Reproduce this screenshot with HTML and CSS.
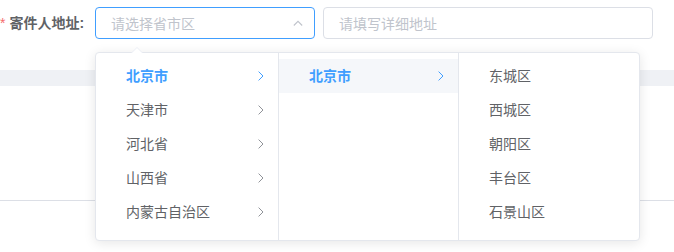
FILE: index.html
```html
<!DOCTYPE html>
<html lang="zh-CN">
<head>
  <meta charset="UTF-8">
  <title>寄件人地址</title>
  <link rel="stylesheet" href="styles.css">
</head>
<body>
  <div class="form-item">
    <label class="form-label"><span class="required">*</span>寄件人地址:</label>
    <div class="form-content">
      <div class="cascader">
        <div class="input is-focus">
          <span class="placeholder">请选择省市区</span>
          <svg class="suffix" width="10" height="6" viewBox="0 0 10 6">
            <polyline points="0.8,5.5 5,1.3 9.2,5.5" fill="none" stroke="#c0c4cc" stroke-width="1.1"/>
          </svg>
        </div>
        <div class="dropdown">
          <div class="popper-arrow"></div>
          <div class="menu menu-first">
            <div class="node is-active"><span class="label">北京市</span><span class="arrow"></span></div>
            <div class="node"><span class="label">天津市</span><span class="arrow"></span></div>
            <div class="node"><span class="label">河北省</span><span class="arrow"></span></div>
            <div class="node"><span class="label">山西省</span><span class="arrow"></span></div>
            <div class="node"><span class="label">内蒙古自治区</span><span class="arrow"></span></div>
          </div>
          <div class="menu">
            <div class="node is-active in-path"><span class="label">北京市</span><span class="arrow"></span></div>
          </div>
          <div class="menu">
            <div class="node"><span class="label">东城区</span></div>
            <div class="node"><span class="label">西城区</span></div>
            <div class="node"><span class="label">朝阳区</span></div>
            <div class="node"><span class="label">丰台区</span></div>
            <div class="node"><span class="label">石景山区</span></div>
          </div>
        </div>
      </div>
      <div class="input detail">
        <span class="placeholder">请填写详细地址</span>
      </div>
    </div>
  </div>
  <div class="table-head"></div>
  <div class="table-body"></div>
  <div class="table-foot"></div>
  <script>
    var arrowSvg = '<svg width="6" height="10" viewBox="0 0 6 10"><polyline points="0.6,0.6 5,5 0.6,9.4" fill="none" stroke="currentColor" stroke-width="1"/></svg>';
    document.querySelectorAll('.arrow').forEach(function(el) {
      el.innerHTML = arrowSvg;
    });
  </script>
</body>
</html>
```

FILE: styles.css
```css
body {
  margin: 0;
  font-family: "Helvetica Neue", Helvetica, "Noto Sans CJK SC", "Microsoft YaHei", sans-serif;
  font-size: 14px;
  color: #606266;
  background: #fff;
}
.form-item {
  display: flex;
  padding-top: 7px;
}
.form-label {
  width: 83px;
  padding-right: 12px;
  line-height: 32px;
  font-weight: bold;
  color: #606266;
  white-space: nowrap;
}
.required {
  color: #f56c6c;
  margin-right: 4px;
  font-weight: normal;
}
.form-content {
  display: flex;
  gap: 8px;
}
.cascader {
  position: relative;
  width: 220px;
}
.input {
  box-sizing: border-box;
  height: 32px;
  border: 1px solid #dcdfe6;
  border-radius: 4px;
  padding: 0 15px;
  display: flex;
  align-items: center;
  justify-content: space-between;
}
.input.is-focus {
  border-color: #409eff;
}
.input.detail {
  width: 330px;
}
.placeholder {
  color: #c0c4cc;
}
.suffix {
  margin-right: -4px;
}
.dropdown {
  position: absolute;
  top: 45px;
  left: 0;
  z-index: 10;
  display: flex;
  background: #fff;
  border: 1px solid #e4e7ed;
  border-radius: 4px;
  box-shadow: 0 2px 12px 0 rgba(0, 0, 0, 0.1);
}
.popper-arrow {
  position: absolute;
  top: -6px;
  left: 35px;
  width: 0;
  height: 0;
  border-left: 6px solid transparent;
  border-right: 6px solid transparent;
  border-bottom: 6px solid #ebeef5;
}
.popper-arrow::after {
  content: "";
  position: absolute;
  left: -6px;
  top: 1px;
  border-left: 6px solid transparent;
  border-right: 6px solid transparent;
  border-bottom: 6px solid #fff;
}
.menu {
  box-sizing: border-box;
  width: 180px;
  height: 187px;
  padding: 6px 0;
  border-right: 1px solid #e4e7ed;
}
.menu-first {
  width: 183px;
}
.menu:last-child {
  border-right: none;
}
.node {
  position: relative;
  height: 34px;
  line-height: 34px;
  padding: 0 30px 0 20px;
  color: #606266;
}
.node .label {
  padding: 0 10px;
}
.node.is-active {
  color: #409eff;
  font-weight: bold;
}
.node.in-path {
  background: #f5f7fa;
}
.node .arrow {
  position: absolute;
  right: 14px;
  top: 0;
  height: 34px;
  display: flex;
  align-items: center;
  color: #909399;
}
.node.is-active .arrow {
  color: #409eff;
}
.table-head {
  margin-top: 31px;
  height: 16px;
  background: #eff1f5;
}
.table-body {
  height: 114px;
  border-bottom: 1px solid #dcdfe6;
}
.table-foot {
  height: 51px;
}
```
